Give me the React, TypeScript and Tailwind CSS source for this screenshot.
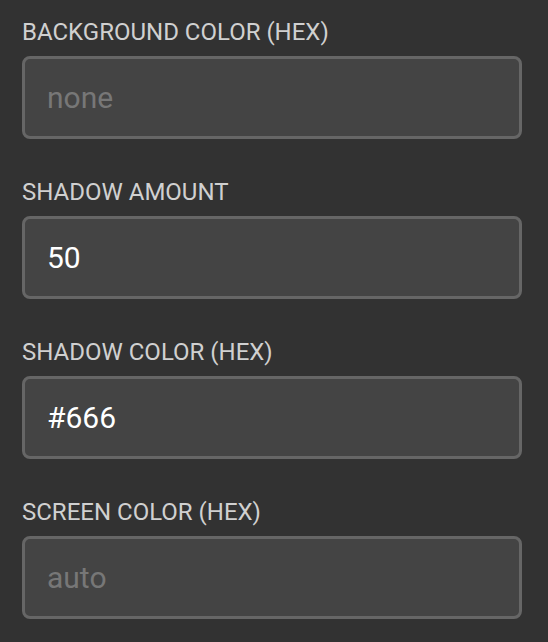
const fields = [
  { label: "Background Color (hex)", value: "", placeholder: "none" },
  { label: "Shadow Amount", value: "50", placeholder: "" },
  { label: "Shadow Color (hex)", value: "#666", placeholder: "" },
  { label: "Screen Color (hex)", value: "", placeholder: "auto" },
];

export default function App() {
  return (
    <div className="min-h-[642px] bg-[#323232] px-[22px] pt-[18px] font-['Roboto',sans-serif]">
      {fields.map((f) => (
        <div key={f.label} className="mb-[39px]">
          <label className="block text-[24px] leading-[28px] uppercase text-[#d0d0d0] mb-[10px]">
            {f.label}
          </label>
          <input
            defaultValue={f.value}
            placeholder={f.placeholder}
            className="block w-[500px] h-[83px] bg-[#444444] border-[3px] border-[#666666] rounded-[8px] px-[22px] text-[30px] text-white placeholder:text-[#777777] outline-none"
          />
        </div>
      ))}
    </div>
  );
}
